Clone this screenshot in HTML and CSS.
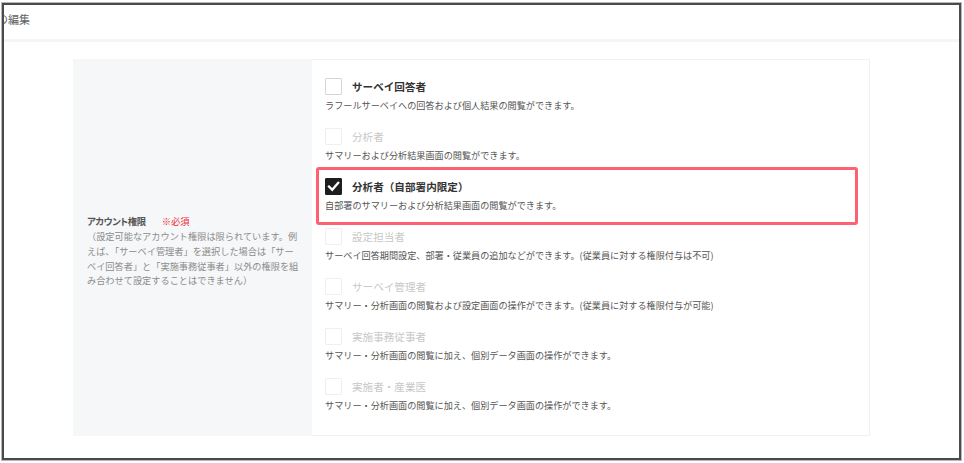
FILE: index.html
```html
<!DOCTYPE html>
<html lang="ja">
<head>
<meta charset="utf-8">
<title>アカウントの編集</title>
<link rel="stylesheet" href="styles.css">
</head>
<body>
<div class="frame">
  <header class="header">
    <h1 class="title">の編集</h1>
  </header>
  <main class="content">
    <section class="card">
      <div class="side">
        <div class="side-inner">
          <div class="side-label">
            <span class="side-name">アカウント権限</span><span class="required">※必須</span>
          </div>
          <p class="side-note">（設定可能なアカウント権限は限られています。例<br>えば、「サーベイ管理者」を選択した場合は「サー<br>ベイ回答者」と「実施事務従事者」以外の権限を組<br>み合わせて設定することはできません）</p>
        </div>
      </div>
      <div class="options">
        <div class="option">
          <div class="option-head">
            <span class="box"></span>
            <span class="option-label">サーベイ回答者</span>
          </div>
          <p class="option-desc">ラフールサーベイへの回答および個人結果の閲覧ができます。</p>
        </div>
        <div class="option is-disabled">
          <div class="option-head">
            <span class="box"></span>
            <span class="option-label">分析者</span>
          </div>
          <p class="option-desc">サマリーおよび分析結果画面の閲覧ができます。</p>
        </div>
        <div class="option is-highlighted">
          <div class="option-head">
            <span class="box is-checked">
              <svg viewBox="0 0 17 17" width="17" height="17"><path d="M4 8.6 L7.2 11.8 L13.2 4.8" fill="none" stroke="#fff" stroke-width="2.3" stroke-linecap="square"/></svg>
            </span>
            <span class="option-label">分析者（自部署内限定）</span>
          </div>
          <p class="option-desc">自部署のサマリーおよび分析結果画面の閲覧ができます。</p>
          <span class="highlight"></span>
        </div>
        <div class="option is-disabled">
          <div class="option-head">
            <span class="box"></span>
            <span class="option-label">設定担当者</span>
          </div>
          <p class="option-desc">サーベイ回答期間設定、部署・従業員の追加などができます。(従業員に対する権限付与は不可)</p>
        </div>
        <div class="option is-disabled">
          <div class="option-head">
            <span class="box"></span>
            <span class="option-label">サーベイ管理者</span>
          </div>
          <p class="option-desc">サマリー・分析画面の閲覧および設定画面の操作ができます。(従業員に対する権限付与が可能)</p>
        </div>
        <div class="option is-disabled">
          <div class="option-head">
            <span class="box"></span>
            <span class="option-label">実施事務従事者</span>
          </div>
          <p class="option-desc">サマリー・分析画面の閲覧に加え、個別データ画面の操作ができます。</p>
        </div>
        <div class="option is-disabled">
          <div class="option-head">
            <span class="box"></span>
            <span class="option-label">実施者・産業医</span>
          </div>
          <p class="option-desc">サマリー・分析画面の閲覧に加え、個別データ画面の操作ができます。</p>
        </div>
      </div>
    </section>
  </main>
</div>
</body>
</html>
```

FILE: styles.css
```css
* {
  box-sizing: border-box;
}

html, body {
  margin: 0;
  padding: 0;
  background: #ffffff;
}

body {
  font-family: "Noto Sans CJK JP", "Noto Sans", sans-serif;
  color: #333;
}

.frame {
  margin: 3px 3px 3px 2px;
  height: 457px;
  border: 2px solid #4a4a4a;
  box-shadow: 0 0 0 1px #b8b8b8;
  overflow: hidden;
  display: flex;
  flex-direction: column;
}

.header {
  height: 37px;
  border-bottom: 3px solid #f5f5f6;
  overflow: hidden;
  flex: none;
}

.title {
  margin: 0 0 0 -7px;
  padding-top: 5px;
  font-size: 11px;
  line-height: 18px;
  font-weight: normal;
  color: #5f5f5f;
}

.content {
  padding: 17px 0 0 69px;
}

.card {
  width: 797px;
  height: 377px;
  display: flex;
}

.side {
  width: 239px;
  background: #f6f7f8;
  display: flex;
  align-items: center;
  padding: 7px 8px 0 14px;
}

.side-label {
  display: flex;
  align-items: center;
  line-height: 14px;
}

.side-name {
  font-size: 9.4px;
  font-weight: bold;
  color: #555;
  font-feature-settings: "palt";
  letter-spacing: -0.4px;
}

.required {
  margin-left: 16px;
  font-size: 9.3px;
  color: #ee2a37;
}

.side-note {
  margin: 1px 0 0;
  font-size: 9.2px;
  line-height: 14.7px;
  color: #8c8c8c;
  white-space: nowrap;
}

.options {
  flex: 1;
  background: #fff;
  border: 1px solid #f1f1f2;
  border-left: none;
  padding: 18px 0 0 13px;
  display: flex;
  flex-direction: column;
  gap: 16px;
}

.option {
  position: relative;
}

.option-head {
  display: flex;
  align-items: center;
  height: 17px;
}

.box {
  width: 17px;
  height: 17px;
  border: 1px solid #d6d6d6;
  border-radius: 1px;
  background: #fff;
  flex: none;
}

.box.is-checked {
  background: #1e1e1e;
  border-color: #1e1e1e;
}

.box.is-checked svg {
  display: block;
  margin: -1px;
}

.option-label {
  margin-left: 10px;
  font-size: 10.6px;
  font-weight: bold;
  color: #333;
  line-height: 17px;
}

.is-disabled .box {
  border-color: #efefef;
}

.is-disabled .option-label {
  font-weight: normal;
  color: #c8c8c8;
}

.option-desc {
  margin: 4px 0 0;
  font-size: 9.15px;
  line-height: 13px;
  color: #555;
  white-space: nowrap;
}

.highlight {
  position: absolute;
  left: -9px;
  top: -11px;
  width: 542px;
  height: 58px;
  border: 3px solid #fd6172;
  border-radius: 3px;
  pointer-events: none;
}
```
